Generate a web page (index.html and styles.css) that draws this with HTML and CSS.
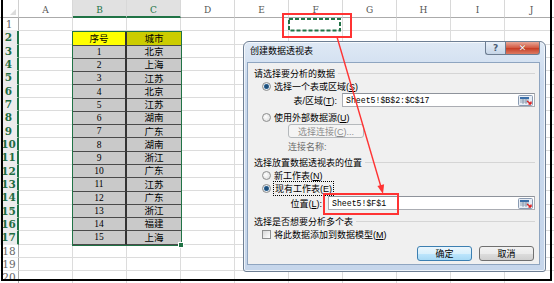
FILE: index.html
```html
<!DOCTYPE html>
<html lang="zh-CN">
<head>
  <meta charset="UTF-8">
  <title>创建数据透视表</title>
  <link rel="stylesheet" href="styles.css">
</head>
<body>

<div class="screen">
  <div class="sheet">
    <div class="corner"><span class="tri"></span></div>

    <div class="colheads">
      <div class="col">A</div>
      <div class="col sel">B</div>
      <div class="col sel">C</div>
      <div class="col">D</div>
      <div class="col">E</div>
      <div class="col">F</div>
      <div class="col">G</div>
      <div class="col">H</div>
      <div class="col">I</div>
      <div class="col">J</div>
    </div>

    <div class="rowheads">
      <div class="rh">1</div>
      <div class="rh sel">2</div>
      <div class="rh sel">3</div>
      <div class="rh sel">4</div>
      <div class="rh sel">5</div>
      <div class="rh sel">6</div>
      <div class="rh sel">7</div>
      <div class="rh sel">8</div>
      <div class="rh sel">9</div>
      <div class="rh sel">10</div>
      <div class="rh sel">11</div>
      <div class="rh sel">12</div>
      <div class="rh sel">13</div>
      <div class="rh sel">14</div>
      <div class="rh sel">15</div>
      <div class="rh sel">16</div>
      <div class="rh sel">17</div>
      <div class="rh">18</div>
      <div class="rh">19</div>
      <div class="rh">20</div>
    </div>

    <div class="cells">
      <div class="ants">
        <svg width="54" height="14" viewBox="0 0 54 14">
          <rect x="1" y="1" width="51" height="11.5" fill="none" stroke="#217346" stroke-width="2" stroke-dasharray="4 2"/>
        </svg>
      </div>

      <div class="range">
        <div class="cell head-a">序号</div><div class="cell head-b">城市</div>
        <div class="cell num">1</div><div class="cell">北京</div>
        <div class="cell num">2</div><div class="cell">上海</div>
        <div class="cell num">3</div><div class="cell">江苏</div>
        <div class="cell num">4</div><div class="cell">北京</div>
        <div class="cell num">5</div><div class="cell">江苏</div>
        <div class="cell num">6</div><div class="cell">湖南</div>
        <div class="cell num">7</div><div class="cell">广东</div>
        <div class="cell num">8</div><div class="cell">湖南</div>
        <div class="cell num">9</div><div class="cell">浙江</div>
        <div class="cell num">10</div><div class="cell">广东</div>
        <div class="cell num">11</div><div class="cell">江苏</div>
        <div class="cell num">12</div><div class="cell">广东</div>
        <div class="cell num">13</div><div class="cell">浙江</div>
        <div class="cell num">14</div><div class="cell">福建</div>
        <div class="cell num">15</div><div class="cell">上海</div>
      </div>
    </div>
  </div>

  <div class="dialog">
    <div class="titlebar">
      <span class="title">创建数据透视表</span>
      <div class="caption-btns">
        <span class="cbtn help">?</span>
        <span class="cbtn close">✕</span>
      </div>
    </div>

    <div class="panel">
      <div class="group g1"><span>请选择要分析的数据</span></div>
      <div class="opt"><span class="radio on"></span><span>选择一个表或区域(<u>S</u>)</span></div>
      <div class="field range-field">
        <label>表/区域(<u>T</u>):</label>
        <div class="input">
          <span>Sheet5!$B$2:$C$17</span>
          <span class="pick">
            <svg width="15" height="11" viewBox="0 0 15 11">
              <rect x="0.5" y="0.5" width="14" height="10" rx="1" fill="#e8eef6" stroke="#8a9bb2"/>
              <rect x="2" y="2" width="9" height="2" fill="#3a6ea8"/>
              <path d="M2 5h9M2 7h9M5 4v5M8 4v5" stroke="#7f8fa6" stroke-width="0.8"/>
              <path d="M9 6l4 3M13 9h-2.5M13 9v-2.5" stroke="#d22" stroke-width="1.4" fill="none"/>
            </svg>
          </span>
        </div>
      </div>
      <div class="opt o2"><span class="radio"></span><span>使用外部数据源(<u>U</u>)</span></div>
      <div class="sub"><span class="btn off"><span>选择连接(<u>C</u>)...</span></span></div>
      <div class="sub muted">连接名称:</div>
      <div class="group g2"><span>选择放置数据透视表的位置</span></div>
      <div class="opt o3"><span class="radio"></span><span>新工作表(<u>N</u>)</span></div>
      <div class="opt o4"><span class="radio on"></span><span class="focus">现有工作表(<u>E</u>)</span></div>
      <div class="field loc-field">
        <label>位置(<u>L</u>):</label>
        <div class="input">
          <span>Sheet5!$F$1</span>
          <span class="pick">
            <svg width="15" height="11" viewBox="0 0 15 11">
              <rect x="0.5" y="0.5" width="14" height="10" rx="1" fill="#e8eef6" stroke="#8a9bb2"/>
              <rect x="2" y="2" width="9" height="2" fill="#3a6ea8"/>
              <path d="M2 5h9M2 7h9M5 4v5M8 4v5" stroke="#7f8fa6" stroke-width="0.8"/>
              <path d="M9 6l4 3M13 9h-2.5M13 9v-2.5" stroke="#d22" stroke-width="1.4" fill="none"/>
            </svg>
          </span>
        </div>
      </div>
      <div class="group g3"><span>选择是否想要分析多个表</span></div>
      <div class="opt"><span class="check"></span><span>将此数据添加到数据模型(<u>M</u>)</span></div>
      <div class="actions">
        <span class="btn default">确定</span>
        <span class="btn">取消</span>
      </div>
    </div>
  </div>

  <svg class="marks" width="554" height="283" viewBox="0 0 554 283">
    <rect x="283" y="14" width="68" height="23" fill="none" stroke="#f33" stroke-width="2"/>
    <rect x="324" y="194" width="74" height="20" fill="none" stroke="#f33" stroke-width="2"/>
    <line x1="337" y1="37" x2="381" y2="187" stroke="#f33" stroke-width="1.4"/>
    <polygon points="383,194 377.4,186 384.1,184.3" fill="#f33"/>
  </svg>

  <div class="frame"></div>
</div>

</body>
</html>
```

FILE: styles.css
```css
* { box-sizing: border-box; }

body {
  margin: 0;
  background: #fff;
  font-family: "Liberation Sans", "Noto Sans CJK SC", sans-serif;
  color: #000;
}

.screen {
  position: relative;
  width: 554px;
  height: 283px;
  overflow: hidden;
}

/* spreadsheet */

.sheet {
  display: grid;
  grid-template-columns: 19px 540px;
  grid-template-rows: 18px 267px;
}

.corner {
  display: flex;
  align-items: flex-end;
  justify-content: flex-end;
  padding: 0 2px 2px 0;
  border-right: 1px solid #d0d0d0;
  border-bottom: 1px solid #ababab;
}

.tri {
  width: 0;
  height: 0;
  border-left: 6px solid transparent;
  border-bottom: 6px solid #dcdcdc;
}

.colheads {
  display: flex;
}

.col {
  width: 54px;
  display: flex;
  align-items: flex-end;
  justify-content: center;
  padding-bottom: 2px;
  border-right: 1px solid #d8d8d8;
  border-bottom: 1px solid #ababab;
  font: 9px "DejaVu Serif", serif;
  color: #555;
}

.col.sel {
  background: #e1e1e1;
  border-bottom: 2px solid #217346;
  color: #217346;
  padding-bottom: 1px;
}

.rowheads {
  display: flex;
  flex-direction: column;
}

.rh {
  height: 13.33px;
  display: flex;
  align-items: center;
  justify-content: center;
  border-right: 1px solid #ababab;
  border-bottom: 1px solid #ececec;
  font: 10.5px "DejaVu Serif", serif;
  color: #666;
}

.rh.sel {
  background: #ececec;
  border-right: 2px solid #217346;
  color: #1d6b3f;
  font-weight: bold;
}

.cells {
  display: grid;
  grid-template-columns: repeat(10, 54px);
  grid-template-rows: repeat(20, 13.33px);
  background-image:
    repeating-linear-gradient(90deg, transparent 0 53px, #dcdcdc 53px 54px),
    repeating-linear-gradient(180deg, transparent 0 12.33px, #dcdcdc 12.33px 13.33px);
}

.ants {
  grid-column: 6;
  grid-row: 1;
  margin-left: -1px;
}

.ants svg { display: block; }

.range {
  grid-column: 2 / 4;
  grid-row: 2 / 18;
  position: relative;
  display: grid;
  grid-template-columns: 1fr 1fr;
  grid-template-rows: repeat(16, 1fr);
  border: 1px solid #217346;
  margin: 0 -1px -1px -1px;
}

.range::after {
  content: "";
  position: absolute;
  right: -3px;
  bottom: -3px;
  width: 4px;
  height: 4px;
  background: #217346;
  border: 1px solid #fff;
}

.cell {
  display: flex;
  align-items: center;
  justify-content: center;
  background: #c9c9c9;
  border-bottom: 1px solid #4a4a4a;
  font-family: "Noto Sans CJK SC", sans-serif;
  font-size: 9.5px;
  line-height: 1;
}

.cell:nth-child(odd) {
  border-right: 2px solid #333;
}

.cell.num {
  font: 9.5px "Liberation Serif", serif;
}

.cell.head-a { background: #ffff00; }
.cell.head-b { background: #cccc00; }

/* dialog */

.dialog {
  position: absolute;
  left: 243px;
  top: 41px;
  width: 303px;
  height: 231px;
  padding: 0 5px 6px 3px;
  display: flex;
  flex-direction: column;
  border: 1px solid #6e7f94;
  border-radius: 6px 6px 3px 3px;
  background: linear-gradient(#dfe9f5, #cbdaee 40px, #c6d6eb);
  box-shadow: inset 0 0 0 1px rgba(255, 255, 255, 0.7);
}

.titlebar {
  height: 20px;
  display: flex;
  justify-content: space-between;
  align-items: flex-start;
}

.title {
  padding-left: 3px;
  font-size: 9px;
  line-height: 18px;
}

.caption-btns {
  display: flex;
}

.cbtn {
  height: 13px;
  display: flex;
  align-items: center;
  justify-content: center;
  border: 1px solid #6d7d91;
  border-top: none;
  font: bold 9px "DejaVu Sans", sans-serif;
}

.cbtn.help {
  width: 20px;
  border-radius: 0 0 0 3px;
  border-right: none;
  background: linear-gradient(#e9f0f8, #c6d5e7);
  color: #4b5d74;
}

.cbtn.close {
  width: 35px;
  border-radius: 0 0 3px 0;
  background: linear-gradient(#e8a797, #d2563f 50%, #c63c24 51%, #dc7a62);
  color: #fff;
  text-shadow: 0 0 1px #6b1a0e;
}

.panel {
  flex: 1;
  display: flex;
  flex-direction: column;
  padding: 3px 4px 0 6px;
  background: #f0f0f0;
  border: 1px solid #8fa5c0;
  font-size: 9px;
}

.group {
  height: 14px;
  display: flex;
  align-items: center;
  gap: 3px;
}

.group::after {
  content: "";
  flex: 1;
  border-top: 1px solid #d5d5d5;
}

.g2 { margin-top: 2px; }
.g3 { margin-top: 4px; }

.opt {
  height: 13px;
  display: flex;
  align-items: center;
  gap: 3px;
  padding-left: 8px;
}

.o2 { height: 14px; margin-top: 3px; }
.o3 { height: 12px; }
.o4 { height: 12px; margin-top: 1px; }

.radio {
  width: 9px;
  height: 9px;
  border-radius: 50%;
  border: 1px solid #8e8f8f;
  background: radial-gradient(circle at 40% 40%, #fff, #d6d6d6);
}

.radio.on {
  background: radial-gradient(circle, #1f4f7a 0 1.8px, #5b8db8 2.4px, #e8ecf0 3px, #d0d0d0);
}

.check {
  width: 9px;
  height: 9px;
  border: 1px solid #8e8f8f;
  background: linear-gradient(135deg, #d8d8d8, #fff);
}

.focus {
  outline: 1px dotted #000;
  outline-offset: 0;
  padding: 0 1px;
}

.field {
  height: 14px;
  display: flex;
  align-items: center;
}

.field label {
  text-align: right;
}

.range-field label { width: 83px; margin-right: 5px; }
.loc-field { margin-top: 2px; }
.loc-field label { width: 68px; margin-right: 6px; }

.input {
  flex: 1;
  height: 14px;
  display: flex;
  align-items: center;
  padding: 0 1px 0 3px;
  background: #fff;
  border: 1px solid #abadb3;
  border-top-color: #8e939b;
  font: 8.2px "Liberation Mono", monospace;
}

.pick {
  margin-left: auto;
  display: flex;
}

.sub {
  height: 14px;
  display: flex;
  align-items: center;
  padding-left: 34px;
}

.muted {
  margin-top: 1px;
  color: #6d6d6d;
}

.btn {
  width: 55px;
  height: 15px;
  display: flex;
  align-items: center;
  justify-content: center;
  border: 1px solid #707070;
  border-radius: 3px;
  background: linear-gradient(#f2f2f2, #ebebeb 50%, #dddddd 51%, #cfcfcf);
}

.btn.off {
  width: 76px;
  height: 14px;
  border-color: #b5b9bc;
  background: #f4f4f4;
  color: #8d8d8d;
}

.btn.default {
  border-color: #3c7fb1;
  background: linear-gradient(#eaf6fd, #d9f0fc 50%, #bee6fd 51%, #a7d9f5);
}

.actions {
  margin-top: 5px;
  display: flex;
  justify-content: flex-end;
  gap: 7px;
  padding-right: 1px;
}

/* annotations */

.marks {
  position: absolute;
  left: 0;
  top: 0;
  pointer-events: none;
}

.frame {
  position: absolute;
  left: 1px;
  top: -3px;
  width: 551px;
  height: 284px;
  border: 2px solid #000;
  pointer-events: none;
}
```
